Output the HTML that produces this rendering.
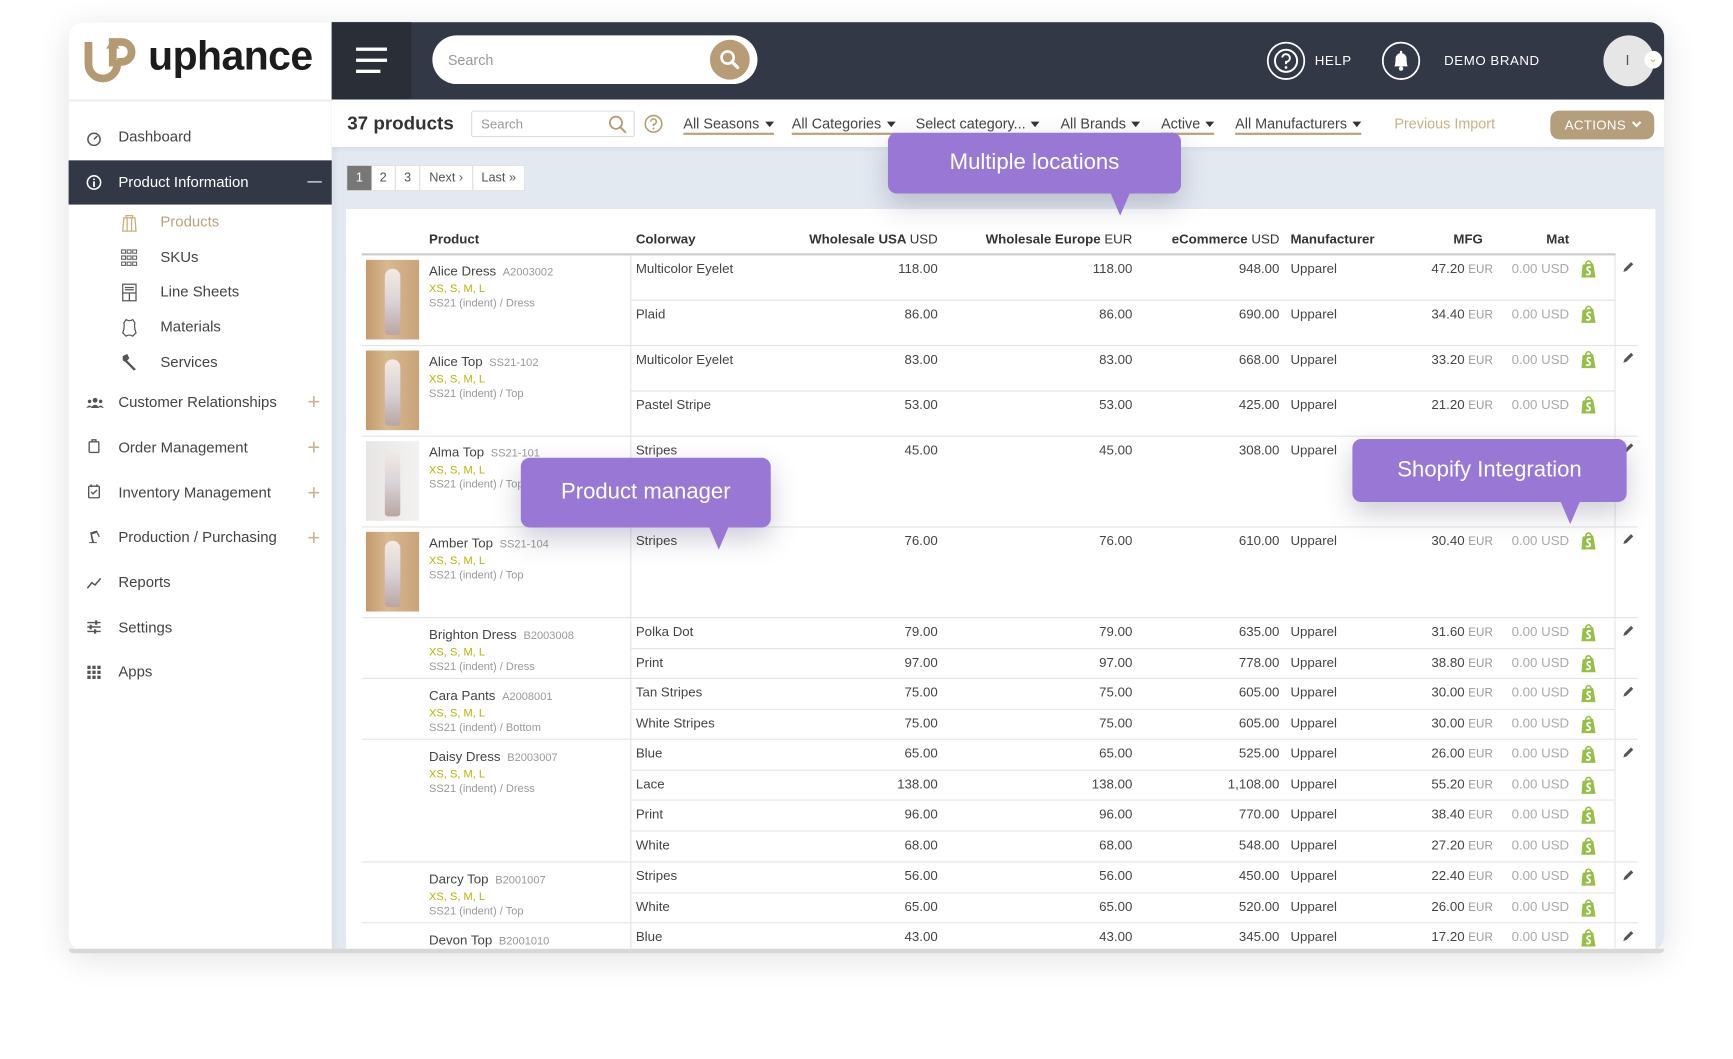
<!DOCTYPE html>
<html><head><meta charset="utf-8">
<style>
*{box-sizing:border-box;margin:0;padding:0}
html,body{width:1733px;height:1059px;overflow:hidden;background:#fff;font-family:"Liberation Sans",sans-serif}
#w{position:absolute;left:0;top:0;width:1560px;height:953px;transform:scale(1.1058);transform-origin:0 0}
.a{position:absolute}
.card{left:62px;top:20px;width:1443px;height:840px;border-radius:14px;box-shadow:0 6px 30px rgba(0,0,0,.12);overflow:hidden;background:#e3e9f1}
.side{left:0;top:0;width:238px;height:840px;background:#fff;box-shadow:2px 0 6px rgba(0,0,0,.06)}
.hdr{left:238px;top:0;width:1205px;height:70px;background:#323846}
.mi{position:absolute;left:45px;font-size:13.5px;color:#444}
.ic{position:absolute;left:16px;width:14px;height:14px}
.sub{position:absolute;left:83px;font-size:13.5px;color:#444}
.plus{position:absolute;left:216px;color:#c9b48f;font-size:20px;font-weight:300;line-height:14px}
.flt{position:absolute;top:14px;font-size:13px;color:#444;border-bottom:2px solid #b9a27e;padding-bottom:1px;white-space:nowrap}
.flt:after{content:"";display:inline-block;margin-left:5px;border-left:4px solid transparent;border-right:4px solid transparent;border-top:5px solid #333;vertical-align:middle}
.row{position:absolute;left:0;width:1560px;font-size:12px;color:#444}
.row span{position:absolute;top:6px;white-space:nowrap;line-height:14px}
.cw{left:575px}.u{right:712px}.e{right:536px}.ec{right:403px}.mf{left:1167px}.mg{right:210px}.mt{right:141px;color:#aaa}
.g{color:#999;font-size:10.5px}
.hl{position:absolute;height:1px;background:#e4e4e4}
.pn{position:absolute;width:12px;height:12px}
.pr{position:absolute;left:388px;white-space:nowrap}
.pr b{font-weight:normal;font-size:12px;color:#444}
.pr i{font-style:normal;font-size:10px;color:#999;margin-left:6px}
.pr .sz{display:block;font-size:10px;color:#b5b500;margin-top:2px}
.pr .ct{display:block;font-size:10px;color:#999;margin-top:2px}
.th{position:absolute;left:331px;width:48px;height:72px;background:linear-gradient(90deg,#c49a6c 0%,#d8b98f 40%,#c9a37a 100%)}
.th:after{content:"";position:absolute;left:17px;top:8px;width:14px;height:60px;border-radius:7px 7px 3px 3px;background:linear-gradient(#f2ebe6,#d9d3d8 50%,#b9a6a0)}
.tip{position:absolute;background:#9878d4;color:#fff;font-size:20px;border-radius:8px;box-shadow:0 10px 24px rgba(60,50,90,.25);display:flex;align-items:center;justify-content:center}
.tip:after{content:"";position:absolute;bottom:-20px;border-left:9px solid transparent;border-right:9px solid transparent;border-top:21px solid #9878d4}
.t1:after{left:201px}.t2:after{left:170px}.t3:after{left:188px}
</style></head><body><div id="w">

<div class="a card">
 <div class="a side">
  <svg class="a" style="left:14px;top:12px" width="52" height="44" viewBox="0 0 52 44">
   <path d="M4 6 V26 A13 13 0 0 0 30 26 V22" fill="none" stroke="#b39a72" stroke-width="7"/>
   <path d="M26 28 V6 H34 A9 9 0 0 1 34 24 H30" fill="none" stroke="#b39a72" stroke-width="7"/>
   <path d="M20 12 L26 2 L32 12 Z" fill="#b39a72"/>
  </svg>
  <div class="a" style="left:72px;top:10px;font-size:37px;font-weight:bold;color:#1c1c1c;letter-spacing:-0.5px">uphance</div>
  <div class="a" style="left:0;top:70px;width:238px;height:2px;background:#eee"></div>

  <svg class="ic" style="top:98px" viewBox="0 0 14 14"><circle cx="7" cy="8" r="5.5" fill="none" stroke="#555" stroke-width="1.4"/><path d="M7 8 L10 5" stroke="#555" stroke-width="1.4"/></svg>
  <div class="mi" style="top:96px">Dashboard</div>

  <div class="a" style="left:0;top:125px;width:238px;height:40px;background:#323846"></div>
  <svg class="ic" style="top:138px" viewBox="0 0 14 14"><circle cx="7" cy="7" r="6" fill="none" stroke="#fff" stroke-width="1.4"/><path d="M7 6 V11 M7 3.5 V4.8" stroke="#fff" stroke-width="1.6"/></svg>
  <div class="mi" style="top:137px;color:#fff">Product Information</div>
  <div class="a" style="left:216px;top:144px;width:13px;height:1px;background:#fff"></div>

  <svg class="a" style="left:47px;top:173px" width="16" height="17" viewBox="0 0 16 17"><path d="M3 4 H13 L14 16 H2 Z M5 4 V2 H11 V4 M6 4 V16 M10 4 V16" fill="none" stroke="#c9b17a" stroke-width="1.2"/></svg>
  <div class="sub" style="top:173px;color:#b9a27e">Products</div>
  <svg class="a" style="left:47px;top:205px" width="16" height="16" viewBox="0 0 16 16" fill="none" stroke="#666" stroke-width="1"><rect x="1" y="1" width="3.5" height="3" /><rect x="6" y="1" width="3.5" height="3"/><rect x="11" y="1" width="3.5" height="3"/><rect x="1" y="6.5" width="3.5" height="3"/><rect x="6" y="6.5" width="3.5" height="3"/><rect x="11" y="6.5" width="3.5" height="3"/><rect x="1" y="12" width="3.5" height="3"/><rect x="6" y="12" width="3.5" height="3"/><rect x="11" y="12" width="3.5" height="3"/></svg>
  <div class="sub" style="top:205px">SKUs</div>
  <svg class="a" style="left:48px;top:236px" width="14" height="17" viewBox="0 0 14 17" fill="none" stroke="#555" stroke-width="1.1"><rect x="1" y="1" width="12" height="15"/><path d="M1 9 H13 M7 9 V16 M3 4 H11 M3 6 H11"/></svg>
  <div class="sub" style="top:236px">Line Sheets</div>
  <svg class="a" style="left:48px;top:268px" width="14" height="17" viewBox="0 0 14 17" fill="none" stroke="#555" stroke-width="1.1"><path d="M4 1 Q7 3 10 1 L12 4 Q11 8 13 13 L10 16 Q7 14 4 16 L1 13 Q3 8 2 4 Z"/></svg>
  <div class="sub" style="top:268px">Materials</div>
  <svg class="a" style="left:47px;top:299px" width="16" height="17" viewBox="0 0 16 17"><path d="M2 3 L6 1 L8 5 L6 7 L14 15 L12 16 L4 8 L2 7 Z" fill="#555"/></svg>
  <div class="sub" style="top:300px">Services</div>

  <svg class="ic" style="top:337px;width:16px" viewBox="0 0 16 14" fill="#555"><circle cx="8" cy="5" r="2.2"/><circle cx="3" cy="6" r="1.6"/><circle cx="13" cy="6" r="1.6"/><path d="M4 12 Q8 6 12 12 Z M0 12 Q3 8 5 11 Z M11 11 Q13 8 16 12 Z"/></svg>
  <div class="mi" style="top:336px">Customer Relationships</div><div class="plus" style="top:337px">+</div>
  <svg class="ic" style="top:376px" viewBox="0 0 14 16" fill="none" stroke="#555" stroke-width="1.4"><rect x="2" y="4" width="10" height="11" rx="1"/><path d="M5 4 V2 H9 V4"/></svg>
  <div class="mi" style="top:377px">Order Management</div><div class="plus" style="top:378px">+</div>
  <svg class="ic" style="top:417px" viewBox="0 0 14 16" fill="none" stroke="#555" stroke-width="1.4"><rect x="1.5" y="3" width="11" height="12" rx="1"/><path d="M4 1 V4 M10 1 V4 M4 9 L6 11 L10 7"/></svg>
  <div class="mi" style="top:418px">Inventory Management</div><div class="plus" style="top:419px">+</div>
  <svg class="ic" style="top:458px" viewBox="0 0 14 16" fill="#555"><path d="M2 14 H10 V15 H2 Z M5 14 L3 4 L10 2 L11 4 L5 6 L7 14 Z M11 4 L13 8 L12 9 L10 5 Z"/></svg>
  <div class="mi" style="top:458px">Production / Purchasing</div><div class="plus" style="top:460px">+</div>
  <svg class="ic" style="top:500px" viewBox="0 0 14 14" fill="none" stroke="#555" stroke-width="1.4"><path d="M1 12 L5 7 L8 9 L13 3"/></svg>
  <div class="mi" style="top:499px">Reports</div>
  <svg class="ic" style="top:540px" viewBox="0 0 14 14" stroke="#555" stroke-width="1.3"><path d="M1 3 H13 M1 7 H13 M1 11 H13"/><path d="M9 1 V5 M4 5 V9 M8 9 V13" stroke-width="2"/></svg>
  <div class="mi" style="top:540px">Settings</div>
  <svg class="ic" style="top:581px" viewBox="0 0 14 14" fill="#555"><rect x="1" y="1" width="3" height="3"/><rect x="5.5" y="1" width="3" height="3"/><rect x="10" y="1" width="3" height="3"/><rect x="1" y="5.5" width="3" height="3"/><rect x="5.5" y="5.5" width="3" height="3"/><rect x="10" y="5.5" width="3" height="3"/><rect x="1" y="10" width="3" height="3"/><rect x="5.5" y="10" width="3" height="3"/><rect x="10" y="10" width="3" height="3"/></svg>
  <div class="mi" style="top:580px">Apps</div>
 </div>

 <div class="a hdr">
  <div class="a" style="left:0;top:0;width:72px;height:70px;background:#2a2e37"></div>
  <div class="a" style="left:22px;top:23px;width:28px;height:3px;background:#fff"></div>
  <div class="a" style="left:22px;top:33px;width:28px;height:3px;background:#fff"></div>
  <div class="a" style="left:22px;top:43px;width:22px;height:3px;background:#fff"></div>
  <div class="a" style="left:91px;top:12px;width:294px;height:44px;border-radius:22px;background:#fff"></div>
  <div class="a" style="left:105px;top:27px;font-size:13px;color:#999">Search</div>
  <div class="a" style="left:342px;top:16px;width:36px;height:36px;border-radius:50%;background:#b79c76"></div>
  <svg class="a" style="left:350px;top:24px" width="20" height="20" viewBox="0 0 20 20"><circle cx="8" cy="8" r="5.5" fill="none" stroke="#fff" stroke-width="2.4"/><path d="M12 12 L17 17" stroke="#fff" stroke-width="3" stroke-linecap="round"/></svg>
  <svg class="a" style="left:845px;top:17px" width="36" height="36" viewBox="0 0 36 36"><circle cx="18" cy="18" r="16.5" fill="none" stroke="#fff" stroke-width="1.6"/><circle cx="18" cy="18" r="10" fill="none" stroke="#fff" stroke-width="1.8"/><path d="M14.5 15 A3.5 3.5 0 1 1 18 19 V21" fill="none" stroke="#fff" stroke-width="1.8"/><circle cx="18" cy="24" r="1.2" fill="#fff"/></svg>
  <div class="a" style="left:889px;top:28px;font-size:12px;color:#fff;letter-spacing:.5px">HELP</div>
  <svg class="a" style="left:949px;top:17px" width="36" height="36" viewBox="0 0 36 36"><circle cx="18" cy="18" r="16.5" fill="none" stroke="#fff" stroke-width="1.6"/><path d="M12 23 Q13 21 13 16 A5 5 0 0 1 23 16 Q23 21 24 23 Z" fill="#fff"/><circle cx="18" cy="25" r="2" fill="#fff"/><rect x="17" y="9" width="2" height="3" fill="#fff"/></svg>
  <div class="a" style="left:1006px;top:28px;font-size:12px;color:#fff;letter-spacing:.5px">DEMO BRAND</div>
  <div class="a" style="left:1150px;top:12px;width:46px;height:46px;border-radius:50%;background:#e6e6e6"></div>
  <div class="a" style="left:1170px;top:27px;font-size:13px;color:#555">I</div>
  <div class="a" style="left:1187px;top:26px;width:16px;height:16px;border-radius:50%;background:#fff;color:#c9b14a;font-size:10px;text-align:center;line-height:15px">&#8964;</div>
 </div>

 <div class="a" style="left:238px;top:70px;width:1205px;height:43px;background:#fff;box-shadow:0 2px 4px rgba(0,0,0,.05)">
  <div class="a" style="left:14px;top:12px;font-size:17px;font-weight:bold;color:#333">37 products</div>
  <div class="a" style="left:126px;top:10px;width:148px;height:24px;border:1px solid #ddd;border-radius:2px"></div>
  <div class="a" style="left:135px;top:15px;font-size:12px;color:#999">Search</div>
  <svg class="a" style="left:250px;top:14px" width="17" height="17" viewBox="0 0 17 17"><circle cx="7" cy="7" r="5.5" fill="none" stroke="#b39a72" stroke-width="1.6"/><path d="M11 11 L16 16" stroke="#b39a72" stroke-width="1.8"/></svg>
  <svg class="a" style="left:282px;top:13px" width="18" height="18" viewBox="0 0 18 18"><circle cx="9" cy="9" r="7.5" fill="none" stroke="#b39a72" stroke-width="1.4"/><path d="M6.5 7 A2.5 2.5 0 1 1 9 9.5 V11" fill="none" stroke="#b39a72" stroke-width="1.4"/><circle cx="9" cy="13.2" r=".9" fill="#b39a72"/></svg>
  <div class="flt" style="left:318px">All Seasons</div>
  <div class="flt" style="left:416px">All Categories</div>
  <div class="flt" style="left:528px;border-color:transparent">Select category...</div>
  <div class="flt" style="left:659px;border-color:transparent">All Brands</div>
  <div class="flt" style="left:750px">Active</div>
  <div class="flt" style="left:817px">All Manufacturers</div>
  <div class="a" style="left:961px;top:14px;font-size:13px;color:#c9b084">Previous Import</div>
  <div class="a" style="left:1102px;top:10px;width:94px;height:26px;border-radius:8px;background:#b59e7c;color:#fff;font-size:12px;line-height:26px;padding-left:13px;letter-spacing:.3px">ACTIONS <span style="display:inline-block;width:6px;height:6px;border-right:2px solid #fff;border-bottom:2px solid #fff;transform:rotate(45deg);margin:0 0 3px 3px"></span></div>
 </div>

 <div class="a" style="left:251px;top:129px;height:24px;display:flex;border:1px solid #ddd;background:#fff;font-size:11.5px;color:#555">
  <div style="width:22px;background:#777;color:#fff;text-align:center;line-height:22px">1</div>
  <div style="width:22px;text-align:center;line-height:22px;border-right:1px solid #ddd">2</div>
  <div style="width:22px;text-align:center;line-height:22px;border-right:1px solid #ddd">3</div>
  <div style="width:48px;text-align:center;line-height:22px;border-right:1px solid #ddd">Next ›</div>
  <div style="width:46px;text-align:center;line-height:22px">Last »</div>
 </div>

 <div class="a" style="left:251px;top:169px;width:1184px;height:680px;background:#fff"></div>
</div>

<div class="row" style="top:207px;font-weight:bold;color:#333">
 <span style="left:388px;top:2px">Product</span><span style="left:575px;top:2px">Colorway</span>
 <span class="u" style="top:2px">Wholesale USA <b style="font-weight:normal">USD</b></span>
 <span class="e" style="top:2px">Wholesale Europe <b style="font-weight:normal">EUR</b></span>
 <span class="ec" style="top:2px">eCommerce <b style="font-weight:normal">USD</b></span>
 <span class="mf" style="top:2px">Manufacturer</span>
 <span style="right:219px;top:2px">MFG</span><span style="right:141px;top:2px">Mat</span>
</div>
<div class="hl" style="left:327px;top:229px;width:1134px;height:2px;background:#ccc"></div>
<div class="a" style="left:570px;top:231px;width:1px;height:629px;background:#e4e4e4"></div>
<div class="a" style="left:1460px;top:231px;width:1px;height:629px;background:#e4e4e4"></div>

<div class="hl" style="left:327px;top:312px;width:1154px"></div>
<div class="hl" style="left:327px;top:394px;width:1154px"></div>
<div class="hl" style="left:327px;top:476px;width:1154px"></div>
<div class="hl" style="left:327px;top:558px;width:1154px"></div>
<div class="hl" style="left:327px;top:613px;width:1154px"></div>
<div class="hl" style="left:327px;top:668px;width:1154px"></div>
<div class="hl" style="left:327px;top:779px;width:1154px"></div>
<div class="hl" style="left:327px;top:834px;width:1154px"></div>
<div class="hl" style="left:570px;top:271px;width:890px"></div>
<div class="hl" style="left:570px;top:353px;width:890px"></div>
<div class="hl" style="left:570px;top:586px;width:890px"></div>
<div class="hl" style="left:570px;top:641px;width:890px"></div>
<div class="hl" style="left:570px;top:696px;width:890px"></div>
<div class="hl" style="left:570px;top:723px;width:890px"></div>
<div class="hl" style="left:570px;top:751px;width:890px"></div>
<div class="hl" style="left:570px;top:807px;width:890px"></div>

<svg width="0" height="0" style="position:absolute"><defs>
<symbol id="sp" viewBox="0 0 14 16"><path d="M2 4 L11 3 L13 15 L1 15 Z" fill="#95bf47"/><path d="M4.5 4 Q5 1 7 1 Q9 1 9.5 4" fill="none" stroke="#95bf47" stroke-width="1.3"/><path d="M9 6.5 Q7 5.5 6 7 Q5.5 8.5 7.5 9.5 Q9 10.5 8 12 Q6.5 13 5 12" fill="none" stroke="#fff" stroke-width="1.5"/></symbol>
<symbol id="pc" viewBox="0 0 12 12"><path d="M2 10 L3 7 L9 1 L11 3 L5 9 Z" fill="#555"/></symbol>
</defs></svg>

<div class="th" style="top:235px"></div>
<div class="pr" style="top:236px"><b>Alice Dress</b><i>A2003002</i><span class="sz">XS, S, M, L</span><span class="ct">SS21 (indent) / Dress</span></div>
<div class="th" style="top:317px"></div>
<div class="pr" style="top:318px"><b>Alice Top</b><i>SS21-102</i><span class="sz">XS, S, M, L</span><span class="ct">SS21 (indent) / Top</span></div>
<div class="th" style="top:399px;background:linear-gradient(90deg,#e8e6e4,#f4f2f0)"></div>
<div class="pr" style="top:400px"><b>Alma Top</b><i>SS21-101</i><span class="sz">XS, S, M, L</span><span class="ct">SS21 (indent) / Top</span></div>
<div class="th" style="top:481px"></div>
<div class="pr" style="top:482px"><b>Amber Top</b><i>SS21-104</i><span class="sz">XS, S, M, L</span><span class="ct">SS21 (indent) / Top</span></div>
<div class="pr" style="top:565px"><b>Brighton Dress</b><i>B2003008</i><span class="sz">XS, S, M, L</span><span class="ct">SS21 (indent) / Dress</span></div>
<div class="pr" style="top:620px"><b>Cara Pants</b><i>A2008001</i><span class="sz">XS, S, M, L</span><span class="ct">SS21 (indent) / Bottom</span></div>
<div class="pr" style="top:675px"><b>Daisy Dress</b><i>B2003007</i><span class="sz">XS, S, M, L</span><span class="ct">SS21 (indent) / Dress</span></div>
<div class="pr" style="top:786px"><b>Darcy Top</b><i>B2001007</i><span class="sz">XS, S, M, L</span><span class="ct">SS21 (indent) / Top</span></div>
<div class="pr" style="top:841px;height:19px;overflow:hidden"><b>Devon Top</b><i>B2001010</i><span class="sz">XS, S, M, L</span></div>

<div class="row" style="top:230px"><span class="cw">Multicolor Eyelet</span><span class="u">118.00</span><span class="e">118.00</span><span class="ec">948.00</span><span class="mf">Upparel</span><span class="mg">47.20 <em class="g" style="font-style:normal">EUR</em></span><span class="mt">0.00 USD</span><svg class="a" style="left:1429px;top:5px" width="15" height="17"><use href="#sp"/></svg><svg class="pn" style="left:1466px;top:6px"><use href="#pc"/></svg></div>
<div class="row" style="top:271px"><span class="cw">Plaid</span><span class="u">86.00</span><span class="e">86.00</span><span class="ec">690.00</span><span class="mf">Upparel</span><span class="mg">34.40 <em class="g" style="font-style:normal">EUR</em></span><span class="mt">0.00 USD</span><svg class="a" style="left:1429px;top:5px" width="15" height="17"><use href="#sp"/></svg></div>
<div class="row" style="top:312px"><span class="cw">Multicolor Eyelet</span><span class="u">83.00</span><span class="e">83.00</span><span class="ec">668.00</span><span class="mf">Upparel</span><span class="mg">33.20 <em class="g" style="font-style:normal">EUR</em></span><span class="mt">0.00 USD</span><svg class="a" style="left:1429px;top:5px" width="15" height="17"><use href="#sp"/></svg><svg class="pn" style="left:1466px;top:6px"><use href="#pc"/></svg></div>
<div class="row" style="top:353px"><span class="cw">Pastel Stripe</span><span class="u">53.00</span><span class="e">53.00</span><span class="ec">425.00</span><span class="mf">Upparel</span><span class="mg">21.20 <em class="g" style="font-style:normal">EUR</em></span><span class="mt">0.00 USD</span><svg class="a" style="left:1429px;top:5px" width="15" height="17"><use href="#sp"/></svg></div>
<div class="row" style="top:394px"><span class="cw">Stripes</span><span class="u">45.00</span><span class="e">45.00</span><span class="ec">308.00</span><span class="mf">Upparel</span><span class="mg">18.00 <em class="g" style="font-style:normal">EUR</em></span><span class="mt">0.00 USD</span><svg class="a" style="left:1429px;top:5px" width="15" height="17"><use href="#sp"/></svg><svg class="pn" style="left:1466px;top:6px"><use href="#pc"/></svg></div>
<div class="row" style="top:476px"><span class="cw">Stripes</span><span class="u">76.00</span><span class="e">76.00</span><span class="ec">610.00</span><span class="mf">Upparel</span><span class="mg">30.40 <em class="g" style="font-style:normal">EUR</em></span><span class="mt">0.00 USD</span><svg class="a" style="left:1429px;top:5px" width="15" height="17"><use href="#sp"/></svg><svg class="pn" style="left:1466px;top:6px"><use href="#pc"/></svg></div>
<div class="row" style="top:558px"><span class="cw">Polka Dot</span><span class="u">79.00</span><span class="e">79.00</span><span class="ec">635.00</span><span class="mf">Upparel</span><span class="mg">31.60 <em class="g" style="font-style:normal">EUR</em></span><span class="mt">0.00 USD</span><svg class="a" style="left:1429px;top:6px" width="15" height="17"><use href="#sp"/></svg><svg class="pn" style="left:1466px;top:7px"><use href="#pc"/></svg></div>
<div class="row" style="top:586px"><span class="cw">Print</span><span class="u">97.00</span><span class="e">97.00</span><span class="ec">778.00</span><span class="mf">Upparel</span><span class="mg">38.80 <em class="g" style="font-style:normal">EUR</em></span><span class="mt">0.00 USD</span><svg class="a" style="left:1429px;top:6px" width="15" height="17"><use href="#sp"/></svg></div>
<div class="row" style="top:613px"><span class="cw">Tan Stripes</span><span class="u">75.00</span><span class="e">75.00</span><span class="ec">605.00</span><span class="mf">Upparel</span><span class="mg">30.00 <em class="g" style="font-style:normal">EUR</em></span><span class="mt">0.00 USD</span><svg class="a" style="left:1429px;top:6px" width="15" height="17"><use href="#sp"/></svg><svg class="pn" style="left:1466px;top:7px"><use href="#pc"/></svg></div>
<div class="row" style="top:641px"><span class="cw">White Stripes</span><span class="u">75.00</span><span class="e">75.00</span><span class="ec">605.00</span><span class="mf">Upparel</span><span class="mg">30.00 <em class="g" style="font-style:normal">EUR</em></span><span class="mt">0.00 USD</span><svg class="a" style="left:1429px;top:6px" width="15" height="17"><use href="#sp"/></svg></div>
<div class="row" style="top:668px"><span class="cw">Blue</span><span class="u">65.00</span><span class="e">65.00</span><span class="ec">525.00</span><span class="mf">Upparel</span><span class="mg">26.00 <em class="g" style="font-style:normal">EUR</em></span><span class="mt">0.00 USD</span><svg class="a" style="left:1429px;top:6px" width="15" height="17"><use href="#sp"/></svg><svg class="pn" style="left:1466px;top:7px"><use href="#pc"/></svg></div>
<div class="row" style="top:696px"><span class="cw">Lace</span><span class="u">138.00</span><span class="e">138.00</span><span class="ec">1,108.00</span><span class="mf">Upparel</span><span class="mg">55.20 <em class="g" style="font-style:normal">EUR</em></span><span class="mt">0.00 USD</span><svg class="a" style="left:1429px;top:6px" width="15" height="17"><use href="#sp"/></svg></div>
<div class="row" style="top:723px"><span class="cw">Print</span><span class="u">96.00</span><span class="e">96.00</span><span class="ec">770.00</span><span class="mf">Upparel</span><span class="mg">38.40 <em class="g" style="font-style:normal">EUR</em></span><span class="mt">0.00 USD</span><svg class="a" style="left:1429px;top:6px" width="15" height="17"><use href="#sp"/></svg></div>
<div class="row" style="top:751px"><span class="cw">White</span><span class="u">68.00</span><span class="e">68.00</span><span class="ec">548.00</span><span class="mf">Upparel</span><span class="mg">27.20 <em class="g" style="font-style:normal">EUR</em></span><span class="mt">0.00 USD</span><svg class="a" style="left:1429px;top:6px" width="15" height="17"><use href="#sp"/></svg></div>
<div class="row" style="top:779px"><span class="cw">Stripes</span><span class="u">56.00</span><span class="e">56.00</span><span class="ec">450.00</span><span class="mf">Upparel</span><span class="mg">22.40 <em class="g" style="font-style:normal">EUR</em></span><span class="mt">0.00 USD</span><svg class="a" style="left:1429px;top:6px" width="15" height="17"><use href="#sp"/></svg><svg class="pn" style="left:1466px;top:7px"><use href="#pc"/></svg></div>
<div class="row" style="top:807px"><span class="cw">White</span><span class="u">65.00</span><span class="e">65.00</span><span class="ec">520.00</span><span class="mf">Upparel</span><span class="mg">26.00 <em class="g" style="font-style:normal">EUR</em></span><span class="mt">0.00 USD</span><svg class="a" style="left:1429px;top:6px" width="15" height="17"><use href="#sp"/></svg></div>
<div class="row" style="top:834px"><span class="cw">Blue</span><span class="u">43.00</span><span class="e">43.00</span><span class="ec">345.00</span><span class="mf">Upparel</span><span class="mg">17.20 <em class="g" style="font-style:normal">EUR</em></span><span class="mt">0.00 USD</span><svg class="a" style="left:1429px;top:6px" width="15" height="17"><use href="#sp"/></svg><svg class="pn" style="left:1466px;top:7px"><use href="#pc"/></svg></div>

<div class="a" style="left:62px;top:858px;width:1443px;height:4px;background:#d8d8d8;border-radius:0 0 10px 10px"></div>

<div class="tip t1" style="left:803px;top:120px;width:265px;height:55px">Multiple locations</div>
<div class="tip t2" style="left:471px;top:414px;width:226px;height:63px">Product manager</div>
<div class="tip t3" style="left:1223px;top:397px;width:248px;height:57px">Shopify Integration</div>

</div></body></html>
